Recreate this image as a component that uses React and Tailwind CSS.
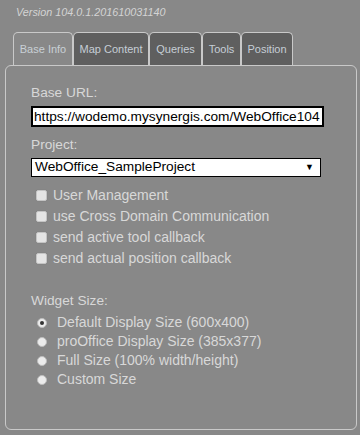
import { useState } from 'react';

const tabs = [
    { name: 'Base Info', w: 'w-[60px]' },
    { name: 'Map Content', w: 'w-[76px]' },
    { name: 'Queries', w: 'w-[53px]' },
    { name: 'Tools', w: 'w-[39px]' },
    { name: 'Position', w: 'w-[52px]' },
];

const checks = [
    'User Management',
    'use Cross Domain Communication',
    'send active tool callback',
    'send actual position callback',
];

const sizes = [
    'Default Display Size (600x400)',
    'proOffice Display Size (385x377)',
    'Full Size (100% width/height)',
    'Custom Size',
];

export default function App() {
    const [active, setActive] = useState(0);
    const [size, setSize] = useState(0);

    return (
        <div className="w-[360px] h-[435px] bg-[#888888] overflow-hidden font-['Liberation_Sans',Arial,sans-serif]">
            <div className="pt-[6px] pl-[16px] h-[32px] text-[10.8px] leading-[12px] italic text-[#d4d4d4]">
                Version 104.0.1.201610031140
            </div>

            {/* tabs */}
            <div className="flex ml-[13px] h-[33px]">
                {tabs.map((t, i) => (
                    <div
                        key={t.name}
                        onClick={() => setActive(i)}
                        className={`${t.w} flex items-center justify-center border border-b-0 border-[#c9c9c9] rounded-t-[5px] text-[11px] cursor-pointer ${i === active ? 'bg-[#888888] text-[#c9d0d6]' : 'bg-[#5f5f5f] text-[#c6ced6]'}`}
                    >
                        {t.name}
                    </div>
                ))}
            </div>

            {/* panel */}
            <div className="ml-[5px] w-[352px] h-[365px] border border-[#c9c9c9] rounded-[6px] pt-[19px] pl-[25px] text-[#d8d8d8] text-[14px]">
                <div className="leading-[16px] text-[13.7px]">Base URL:</div>
                <input
                    className="mt-[5px] w-[293px] h-[21px] border-2 border-black bg-white text-black px-[1px] text-[13.7px] outline-none block"
                    defaultValue="https://wodemo.mysynergis.com/WebOffice104"
                />

                <div className="mt-[10px] leading-[16px] text-[13.7px]">Project:</div>
                <div className="mt-[5px] w-[290px] h-[19px] border border-black bg-white text-black text-[13.7px] flex items-center justify-between pl-[3px] pr-[6px]">
                    <span>WebOffice_SampleProject</span>
                    <span className="text-[9px]">▼</span>
                </div>

                <div className="mt-[8px]">
                    {checks.map(c => (
                        <div key={c} className="h-[21px] flex items-center">
                            <span className="ml-[5px] w-[11px] h-[11px] rounded-[2px] bg-[#e4e4e4] border border-[#c4c4c4] shadow-[0_0_1px_rgba(0,0,0,0.2)]" />
                            <span className="ml-[6px]">{c}</span>
                        </div>
                    ))}
                </div>

                <div className="mt-[24px] leading-[16px] text-[13.7px]">Widget Size:</div>
                <div className="mt-[4px]">
                    {sizes.map((s, i) => (
                        <div key={s} className="h-[19px] flex items-center cursor-pointer" onClick={() => setSize(i)}>
                            <span className="ml-[6px] w-[10px] h-[10px] rounded-full bg-[#ececec] border border-[#bdbdbd] flex items-center justify-center">
                                {i === size && <span className="w-[4px] h-[4px] rounded-full bg-[#333]" />}
                            </span>
                            <span className="ml-[10px]">{s}</span>
                        </div>
                    ))}
                </div>
            </div>
        </div>
    );
}
